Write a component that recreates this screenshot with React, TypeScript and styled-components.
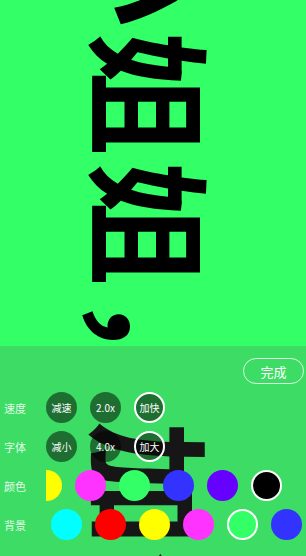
import React from 'react';
import styled, { createGlobalStyle } from 'styled-components';

const GlobalStyle = createGlobalStyle`
  html, body {
    margin: 0;
    padding: 0;
    background: #33ff66;
  }
  body {
    font-family: "Noto Sans CJK SC", "Noto Sans", sans-serif;
  }
`;

const Screen = styled.div`
  position: relative;
  width: 306px;
  height: 556px;
  overflow: hidden;
  background: #33ff66;
`;

const Stage = styled.div`
  display: flex;
  justify-content: center;
  height: 100%;
  padding-left: 2px;
`;

const Marquee = styled.div<{ $scroll: number }>`
  writing-mode: vertical-rl;
  text-orientation: sideways;
  white-space: nowrap;
  font-family: "Noto Sans CJK SC", sans-serif;
  font-weight: 700;
  font-size: 125px;
  letter-spacing: 5px;
  line-height: 1;
  color: #000;
  transform: translateY(${({ $scroll }) => -$scroll}px);
`;

const Panel = styled.div`
  position: absolute;
  left: 0;
  right: 0;
  bottom: 0;
  height: 210px;
  background: rgba(100, 100, 100, 0.22);
  display: flex;
  flex-direction: column;
  padding-top: 12px;
  box-sizing: border-box;
`;

const TopBar = styled.div`
  display: flex;
  justify-content: flex-end;
  padding-right: 2px;
  margin-bottom: 4px;
`;

const DoneButton = styled.button`
  width: 61px;
  height: 26px;
  border-radius: 13px;
  border: 1.5px solid rgba(255, 255, 255, 0.8);
  background: transparent;
  color: #fff;
  font-family: "Noto Sans CJK SC", sans-serif;
  font-size: 13px;
  padding: 0;
`;

const Row = styled.div`
  display: grid;
  grid-template-columns: 46px 1fr;
  align-items: center;
  height: 39px;
`;

const Label = styled.span`
  padding-left: 4px;
  font-size: 11px;
  color: rgba(255, 255, 255, 0.88);
`;

const Track = styled.div`
  overflow: hidden;
`;

const Items = styled.div<{ $offset?: number }>`
  display: flex;
  gap: 13px;
  transform: translateX(${({ $offset = 0 }) => $offset}px);
`;

const RoundButton = styled.div<{ $active?: boolean }>`
  flex: none;
  width: 31px;
  height: 31px;
  box-sizing: border-box;
  border-radius: 50%;
  background: rgba(0, 0, 0, 0.5);
  border: ${({ $active }) => ($active ? '2px solid #fff' : 'none')};
  display: flex;
  align-items: center;
  justify-content: center;
  color: #fff;
  font-size: 10px;
`;

const Swatch = styled.div<{ $color: string; $active?: boolean }>`
  flex: none;
  width: 31px;
  height: 31px;
  box-sizing: border-box;
  border-radius: 50%;
  background: ${({ $color }) => $color};
  border: ${({ $active }) => ($active ? '2px solid #fff' : 'none')};
`;

const textColors = ['#ffff00', '#ff33ff', '#33ff66', '#3333ff', '#6600ff', '#000000'];
const bgColors = ['#00ffff', '#ff0000', '#ffff00', '#ff33ff', '#33ff66', '#3333ff', '#6600ff'];

const App: React.FC = () => {
  return (
    <Screen>
      <GlobalStyle />
      <Stage>
        <Marquee $scroll={99}>小姐姐，加个微信吧</Marquee>
      </Stage>
      <Panel>
        <TopBar>
          <DoneButton>完成</DoneButton>
        </TopBar>
        <Row>
          <Label>速度</Label>
          <Track>
            <Items>
              <RoundButton>减速</RoundButton>
              <RoundButton>2.0x</RoundButton>
              <RoundButton $active>加快</RoundButton>
            </Items>
          </Track>
        </Row>
        <Row>
          <Label>字体</Label>
          <Track>
            <Items>
              <RoundButton>减小</RoundButton>
              <RoundButton>4.0x</RoundButton>
              <RoundButton $active>加大</RoundButton>
            </Items>
          </Track>
        </Row>
        <Row>
          <Label>颜色</Label>
          <Track>
            <Items $offset={-15}>
              {textColors.map((c) => (
                <Swatch key={c} $color={c} $active={c === '#000000'} />
              ))}
            </Items>
          </Track>
        </Row>
        <Row>
          <Label>背景</Label>
          <Track>
            <Items $offset={5}>
              {bgColors.map((c) => (
                <Swatch key={c} $color={c} $active={c === '#33ff66'} />
              ))}
            </Items>
          </Track>
        </Row>
      </Panel>
    </Screen>
  );
};

export default App;
